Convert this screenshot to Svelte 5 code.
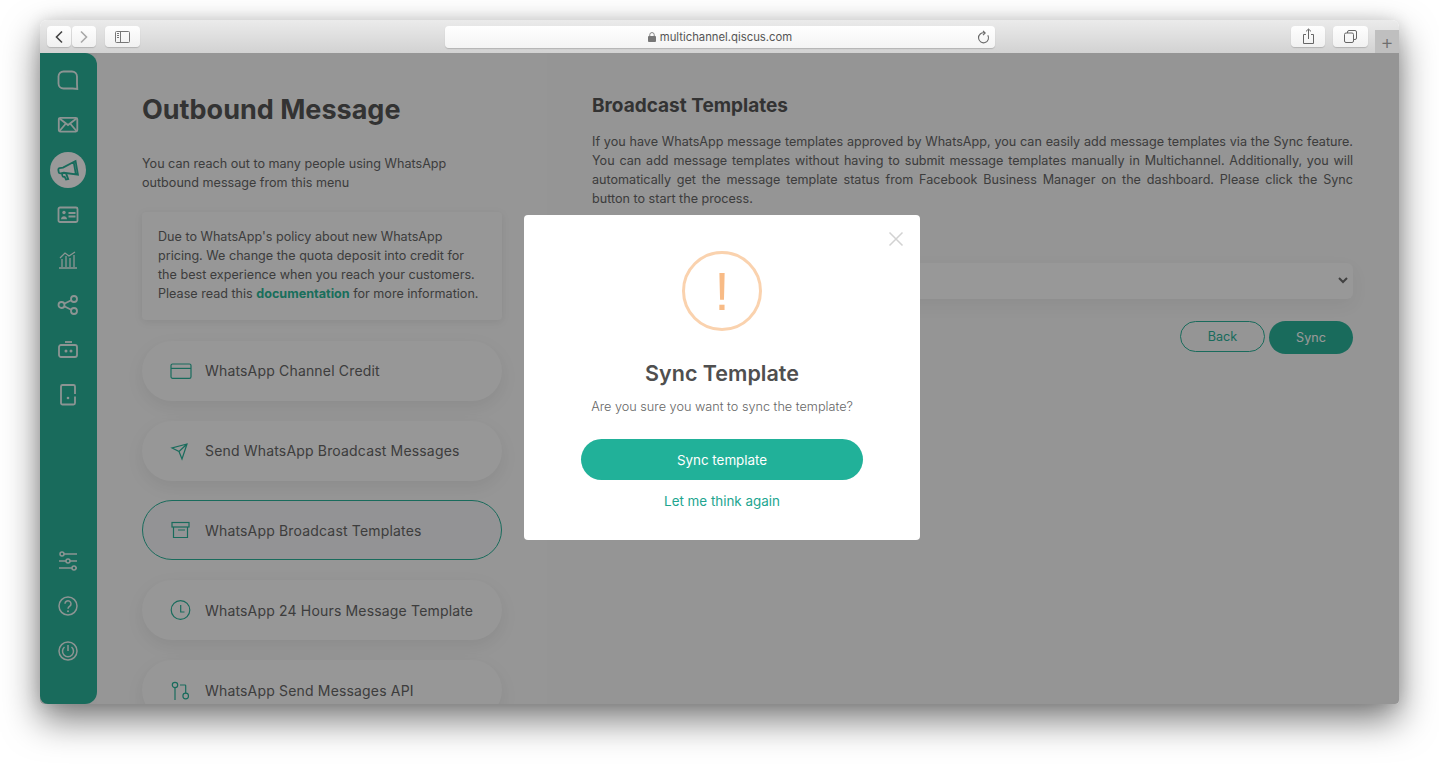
<script lang="ts">
    const rows = [
        { label: "WhatsApp Channel Credit", icon: "card" },
        { label: "Send WhatsApp Broadcast Messages", icon: "send" },
        { label: "WhatsApp Broadcast Templates", icon: "archive", active: true },
        { label: "WhatsApp 24 Hours Message Template", icon: "clock" },
        { label: "WhatsApp Send Messages API", icon: "git" },
    ];
</script>

{#snippet rowIcon(name: string)}
    <svg class="row-icon" width="24" height="24" viewBox="0 0 24 24" fill="none" stroke="currentColor" stroke-width="1.2">
        {#if name === "card"}
            <rect x="2" y="5" width="20" height="14.4" rx="1.6" />
            <path d="M2 9.400h20" />
        {:else if name === "send"}
            <path d="M18 5 3 9l7 3.500 3 7.500zM10 12.500 18 5" />
        {:else if name === "archive"}
            <rect x="3" y="4.500" width="17" height="4.500" />
            <path d="M4.500 9v10.500h14V9M9 12h7" />
        {:else if name === "clock"}
            <circle cx="11.500" cy="12" r="9.300" />
            <path d="M11.700 7v7h3.800" />
        {:else}
            <circle cx="6" cy="7" r="2.700" />
            <path d="M6 9.700V22M11 7h5a.7.7 0 0 1 .7.7v7.500" />
            <circle cx="16.700" cy="18" r="2.800" />
        {/if}
    </svg>
{/snippet}

<div class="stage">
    <div class="window">
        <header class="toolbar">
            <div class="nav-group">
                <button class="tool nav" aria-label="Back">
                    <svg width="10" height="14" viewBox="0 0 10 14" fill="none" stroke="#444" stroke-width="1.6"><path d="M8 1.500 2.500 7 8 12.500" /></svg>
                </button>
                <button class="tool nav" aria-label="Forward">
                    <svg width="10" height="14" viewBox="0 0 10 14" fill="none" stroke="#a8a8a8" stroke-width="1.6"><path d="M2 1.500 7.500 7 2 12.500" /></svg>
                </button>
            </div>
            <button class="tool side" aria-label="Sidebar">
                <svg width="15" height="12" viewBox="0 0 15 12" fill="none" stroke="#777"><rect x=".5" y=".5" width="14" height="11" rx="1" /><path d="M5.500.5v11M2 2.500h2M2 4.500h2M2 6.500h2" /></svg>
            </button>
            <div class="url">
                <svg width="8" height="10" viewBox="0 0 9 11"><rect y="4.500" width="9" height="6.500" rx="1" fill="#777" /><path d="M2 5V3a2.500 2.500 0 0 1 5 0v2" fill="none" stroke="#777" /></svg>
                <span>multichannel.qiscus.com</span>
                <svg class="reload" width="13" height="14" viewBox="0 0 13 14" fill="none" stroke="#666" stroke-width="1.100"><path d="M10.800 5.200a5 5 0 1 1-3.300-2.300" /><path d="M6 .8 8.200 3 6 5.200" /></svg>
            </div>
            <button class="tool share" aria-label="Share">
                <svg width="13" height="17" viewBox="0 0 13 17" fill="none" stroke="#666"><path d="M4 6.500H1.500v9h10v-9H9M6.500 11V1.200M4 3.400 6.500 1 9 3.400" /></svg>
            </button>
            <button class="tool tabs" aria-label="Tabs">
                <svg width="13" height="13" viewBox="0 0 13 13" fill="none" stroke="#666"><rect x=".5" y="3" width="9" height="9.500" rx="1.500" /><path d="M3.500 3V2A1.500 1.500 0 0 1 5 .5h6A1.500 1.500 0 0 1 12.500 2v6A1.500 1.500 0 0 1 11 9.500H9.500" /></svg>
            </button>
            <div class="plus">+</div>
        </header>

        <div class="content">
            <nav class="sidebar">
                <div class="side-item bold">
                    <svg width="24" height="24" viewBox="0 0 24 24"><path d="M7.500 3.500h8.500a5 5 0 0 1 5 5v7.500l.3 5-4.800-.5H7.500a5 5 0 0 1-5-5V8.500a5 5 0 0 1 5-5z" /></svg>
                </div>
                <div class="side-item bold">
                    <svg width="24" height="24" viewBox="0 0 24 24"><rect x="2.800" y="4.800" width="18.500" height="13.800" rx="1.500" /><path d="m3.500 5.500 8.500 6.500 8.500-6.500M3.500 18l6-7M20.500 18l-6-7" /></svg>
                </div>
                <div class="side-item active">
                    <span class="dot">
                        <svg width="24" height="24" viewBox="0 0 24 24"><g transform="rotate(-10 12 12)"><path d="M21 4.500 7.500 8.800H4a1.500 1.500 0 0 0-1.500 1.500v2.200A1.500 1.500 0 0 0 4 14h3.500L21 18.300zM19 5.500v12" /><path d="M5.500 14v2.500c0 .8.700 1.500 1.500 1.500h.5l.9 3h2.200L9.500 15" /></g></svg>
                    </span>
                </div>
                <div class="side-item bold">
                    <svg width="24" height="24" viewBox="0 0 24 24"><rect x="2.500" y="4.500" width="19" height="14.500" rx="1.500" /><circle cx="8" cy="9.500" r="1.700" class="fill" /><path d="M5 16.300c0-2 1.500-3 3-3s3 1 3 3z" class="fill" /><path d="M12.500 10h7M12.500 13.500h7" /></svg>
                </div>
                <div class="side-item thin">
                    <svg width="24" height="24" viewBox="0 0 24 24"><path d="M3 20h18M6 11v8M10 8v11M14 10v9M18 7v12M4 10l5-5 4 3 6-4" /></svg>
                </div>
                <div class="side-item bold">
                    <svg width="24" height="24" viewBox="0 0 24 24"><circle cx="5.500" cy="12" r="3" /><circle cx="18" cy="6" r="3" /><circle cx="18" cy="18" r="3" /><path d="m8.200 10.700 7-3.400M8.200 13.300l7 3.400" /></svg>
                </div>
                <div class="side-item bold">
                    <svg width="24" height="24" viewBox="0 0 24 24"><rect x="3" y="7" width="18" height="12" rx="2" /><path d="M9 4h7" /><circle cx="10" cy="13" r="1.500" class="fill" /><circle cx="15" cy="13" r="1.500" class="fill" /></svg>
                </div>
                <div class="side-item bold">
                    <svg width="24" height="24" viewBox="0 0 24 24"><path d="M19 13.500V20a1.500 1.500 0 0 1-1.500 1.500h-11A1.500 1.500 0 0 1 5 20V3.500A1.500 1.500 0 0 1 6.500 2h11A1.500 1.500 0 0 1 19 3.500V11" /><circle cx="12" cy="15" r="1.300" class="fill" /></svg>
                </div>
                <div class="side-bottom">
                    <div class="side-item">
                        <svg width="24" height="24" viewBox="0 0 24 24"><path d="M8 5h13M3 12h7M14 12h7M3 19h13M20 19h1" /><circle cx="6" cy="5" r="2" /><circle cx="12" cy="12" r="2" /><circle cx="18" cy="19" r="2" /></svg>
                    </div>
                    <div class="side-item">
                        <svg width="24" height="24" viewBox="0 0 24 24"><circle cx="12" cy="12" r="9" /><path d="M9 9.800a3 3 0 1 1 4.800 2.400c-1.200.8-1.800 1.400-1.800 2.600" /><circle cx="12" cy="17.300" r="1" class="fill" /></svg>
                    </div>
                    <div class="side-item">
                        <svg width="24" height="24" viewBox="0 0 24 24"><circle cx="12" cy="12" r="9" /><path d="M8.500 8a5.500 5.500 0 1 0 7 0M12 6v6" /></svg>
                    </div>
                </div>
            </nav>

            <section class="left">
                <h1>Outbound Message</h1>
                <p class="intro">You can reach out to many people using WhatsApp outbound message from this menu</p>
                <div class="notice">
                    Due to WhatsApp's policy about new WhatsApp pricing. We change the quota deposit into credit for the best experience when you reach your customers. Please read this <b>documentation</b> for more information.
                </div>
                {#each rows as row}
                    <div class="row" class:active={row.active}>
                        {@render rowIcon(row.icon)}
                        <span>{row.label}</span>
                    </div>
                {/each}
            </section>

            <section class="right">
                <h2>Broadcast Templates</h2>
                <p class="desc">If you have WhatsApp message templates approved by WhatsApp, you can easily add message templates via the Sync feature. You can add message templates without having to submit message templates manually in Multichannel. Additionally, you will automatically get the message template status from Facebook Business Manager on the dashboard. Please click the Sync button to start the process.</p>
                <div class="select">
                    <svg width="10" height="7" viewBox="0 0 10 7" fill="none" stroke="#6d6d6d" stroke-width="2"><path d="m1 1 4 4 4-4" /></svg>
                </div>
                <div class="actions">
                    <button class="back">Back</button>
                    <button class="sync">Sync</button>
                </div>
            </section>

            <div class="overlay">
                <div class="modal">
                    <svg class="close" width="16" height="16" viewBox="0 0 16 16" stroke="#d2d2d2" stroke-width="1.500"><path d="m1.500 1.500 13 13M14.500 1.500l-13 13" /></svg>
                    <div class="warn">!</div>
                    <h3>Sync Template</h3>
                    <p>Are you sure you want to sync the template?</p>
                    <button class="confirm">Sync template</button>
                    <span class="cancel">Let me think again</span>
                </div>
            </div>
        </div>
    </div>
</div>

<style>
    :global(body) {
        margin: 0;
        background: #fff;
        font-family: Inter, "Liberation Sans", sans-serif;
    }

    .stage {
        height: 764px;
        padding: 20px 40px 60px;
        box-sizing: border-box;
        overflow: hidden;
    }

    .window {
        height: 684px;
        display: flex;
        flex-direction: column;
        border-radius: 7px 7px 4px 4px;
        box-shadow: 0 16px 36px rgba(0, 0, 0, 0.52), 0 0 16px rgba(0, 0, 0, 0.12);
    }

    .toolbar {
        flex: none;
        height: 33px;
        display: flex;
        align-items: flex-start;
        box-sizing: border-box;
        padding-top: 6px;
        padding-left: 7px;
        border-radius: 7px 7px 0 0;
        background: linear-gradient(#ebebeb, #d2d2d2);
    }

    .tool {
        height: 21px;
        padding: 0;
        border: 0;
        border-radius: 4px;
        background: linear-gradient(#fefefe, #f1f1f1);
        box-shadow: 0 1px 1px rgba(0, 0, 0, 0.16);
        display: flex;
        align-items: center;
        justify-content: center;
    }

    .nav-group {
        display: flex;
        gap: 1px;
    }

    .nav {
        width: 24px;
    }

    .side {
        width: 35px;
        margin-left: 9px;
    }

    .url {
        position: relative;
        width: 550px;
        height: 22px;
        margin-left: 305px;
        display: flex;
        align-items: center;
        justify-content: center;
        gap: 4px;
        border-radius: 4px;
        background: linear-gradient(#fff, #f4f4f4);
        box-shadow: 0 1px 1px rgba(0, 0, 0, 0.16);
        color: #555;
        font-size: 11.3px;
    }

    .reload {
        position: absolute;
        right: 5px;
        top: 4px;
    }

    .share {
        width: 34px;
        margin-left: 296px;
    }

    .tabs {
        width: 35px;
        margin-left: 8px;
    }

    .plus {
        width: 24px;
        height: 23px;
        margin: 4px 0 0 7px;
        background: #bfbfbf;
        color: #6e6e6e;
        font-size: 20px;
        font-weight: 300;
        line-height: 25px;
        text-align: center;
    }

    .content {
        position: relative;
        flex: 1;
        min-height: 0;
        display: flex;
        overflow: hidden;
        border-radius: 0 0 4px 4px;
        background: #f8f8f8;
    }

    .sidebar {
        flex: none;
        width: 57px;
        box-sizing: border-box;
        padding: 4px 0 31px;
        display: flex;
        flex-direction: column;
        border-radius: 0 12px 12px 8px;
        background: #2bb39a;
    }

    .side-bottom {
        margin-top: auto;
    }

    .side-item {
        height: 45px;
        padding-left: 16px;
        display: flex;
        align-items: center;
    }

    .side-item svg {
        fill: none;
        stroke: #fff;
        stroke-width: 1.5;
        opacity: 0.9;
    }

    .side-item.bold svg {
        stroke-width: 1.8;
    }

    .side-item.thin svg {
        stroke-width: 1.3;
    }

    .side-item svg .fill {
        fill: #fff;
        stroke: none;
    }

    .side-item.active {
        padding-left: 10px;
    }

    .dot {
        width: 36px;
        height: 36px;
        display: flex;
        align-items: center;
        justify-content: center;
        border-radius: 50%;
        background: #fff;
    }

    .dot svg {
        stroke: #2bb39a;
        stroke-width: 1.8;
        opacity: 1;
    }

    .left {
        flex: none;
        width: 450px;
        box-sizing: border-box;
        padding: 39px 45px 0;
        background: #fafafa;
    }

    h1 {
        margin: 0;
        color: #555;
        font-size: 27px;
        font-weight: 700;
        line-height: 36px;
    }

    .intro {
        margin: 27px 0 19px;
        color: #666;
        font-size: 12.6px;
        line-height: 18.9px;
    }

    .notice {
        box-sizing: border-box;
        height: 108px;
        padding: 16px;
        margin-bottom: 21px;
        border-radius: 4px;
        background: #fcfcfc;
        box-shadow: 0 2px 8px rgba(0, 0, 0, 0.08);
        color: #666;
        font-size: 12.6px;
        line-height: 18.9px;
    }

    .notice b {
        color: #2bb898;
        font-weight: 700;
    }

    .row {
        height: 60px;
        box-sizing: border-box;
        margin-bottom: 19.8px;
        padding-left: 27px;
        display: flex;
        align-items: center;
        gap: 12px;
        border-radius: 30px;
        background: #fcfcfc;
        box-shadow: 0 6px 18px rgba(0, 0, 0, 0.07);
        color: #666;
        font-size: 14px;
        letter-spacing: 0.17px;
    }

    .row.active {
        border: 1px solid #2bb39a;
        padding-left: 26px;
        background: #f6f6f8;
        box-shadow: none;
    }

    .row-icon {
        flex: none;
        color: #2bb39a;
    }

    .right {
        flex: 1;
        min-width: 0;
        padding: 39px 46px 0 45px;
    }

    h2 {
        margin: 0;
        color: #555;
        font-size: 19px;
        font-weight: 700;
        line-height: 28px;
    }

    .desc {
        margin: 13px 0 0;
        color: #666;
        font-size: 12.6px;
        line-height: 18.9px;
        text-align: justify;
    }

    .select {
        height: 36px;
        margin-top: 54px;
        padding-right: 5px;
        display: flex;
        align-items: center;
        justify-content: flex-end;
        border-radius: 6px;
        background: #fdfdfd;
        box-shadow: 0 6px 18px rgba(0, 0, 0, 0.05);
    }

    .actions {
        margin-top: 22px;
        display: flex;
        justify-content: flex-end;
        align-items: flex-start;
        gap: 4px;
    }

    .actions button {
        padding: 0;
        border-radius: 17px;
        font-family: inherit;
        font-size: 12.6px;
    }

    .back {
        width: 85px;
        height: 31px;
        border: 1px solid #2bb39a;
        background: transparent;
        color: #2bb39a;
    }

    .sync {
        width: 84px;
        height: 33px;
        border: 0;
        background: #2bb39a;
        color: #fff;
    }

    .overlay {
        position: absolute;
        inset: 0;
        padding: 162px 0 0 484px;
        background: rgba(0, 0, 0, 0.4);
    }

    .modal {
        position: relative;
        width: 396px;
        height: 325px;
        box-sizing: border-box;
        padding-top: 36px;
        display: flex;
        flex-direction: column;
        align-items: center;
        border-radius: 4px;
        background: #fff;
    }

    .close {
        position: absolute;
        top: 16px;
        right: 16px;
    }

    .warn {
        width: 80px;
        height: 80px;
        box-sizing: border-box;
        border: 3px solid #fad2ae;
        border-radius: 50%;
        color: #f8bb86;
        font-family: "Liberation Sans", sans-serif;
        font-size: 54px;
        line-height: 74px;
        text-align: center;
    }

    h3 {
        margin: 26px 0 0;
        color: #4f4f4f;
        font-size: 21.5px;
        font-weight: 600;
        line-height: 32px;
    }

    .modal p {
        margin: 9px 0 0;
        color: #666;
        font-size: 12.7px;
        font-weight: 300;
        line-height: 18px;
    }

    .confirm {
        width: 282px;
        height: 41px;
        margin-top: 23px;
        border: 0;
        border-radius: 21px;
        background: #21b199;
        color: #fff;
        font-family: inherit;
        font-size: 13.4px;
    }

    .cancel {
        margin-top: 12px;
        color: #21a58f;
        font-size: 13.4px;
        line-height: 18px;
    }
</style>
